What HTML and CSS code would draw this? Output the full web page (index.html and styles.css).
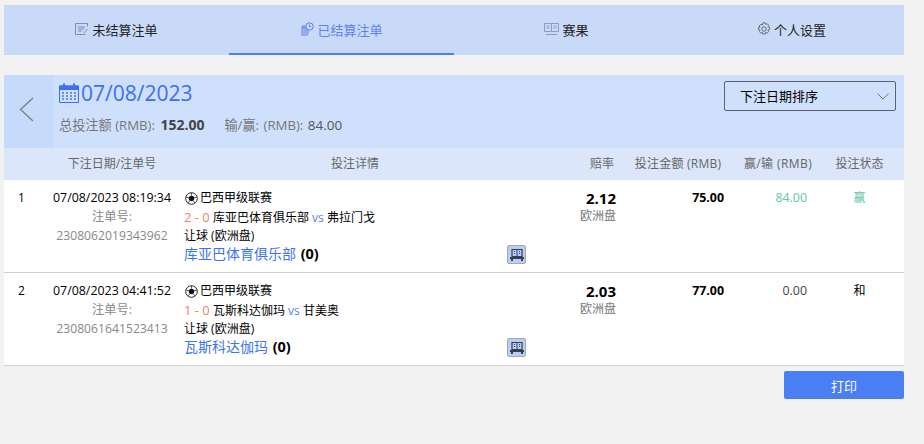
FILE: index.html
```html
<!DOCTYPE html>
<html lang="zh-CN">
<head>
<meta charset="utf-8">
<title>已结算注单</title>
<link rel="stylesheet" href="styles.css">
</head>
<body>
<nav class="tabs">
  <a class="tab"><svg class="tab-icon" viewBox="0 0 14 14"><path d="M.5 1.500h12v3M.5 1.500v11h10M3 5h7M3 7h6M3 9h4M9 11l3.500-4" fill="none" stroke="#7d8fb0"/></svg>未结算注单</a>
  <a class="tab active"><svg class="tab-icon" viewBox="0 0 14 14"><circle cx="9.500" cy="4.500" r="3.700" fill="none" stroke="#5c7fe8"/><path d="M9.500 2.500v2.200h1.700M5.500 4H2v1.500h3.500M1 7h6.500M1 9h8M1 11h8M1 13h7" fill="none" stroke="#5c7fe8"/></svg>已结算注单</a>
  <a class="tab"><svg class="tab-icon wide" viewBox="0 0 15 13"><path d="M.5.500h14v8H.5zM7.500.5v8M2.500 3h3M2.500 5h3M9.500 3h3M9.500 5h3M2 11.500h11" fill="none" stroke="#8a9cc0"/></svg>赛果</a>
  <a class="tab"><svg class="tab-icon" viewBox="0 0 14 14"><circle cx="7" cy="7" r="2.200" fill="none" stroke="#6b6f7a"/><path d="M5.800.8h2.400l.4 1.700 1.500-.9 1.700 1.700-.9 1.500 1.700.4v2.400l-1.700.4.9 1.500-1.700 1.700-1.500-.9-.4 1.700H5.800l-.4-1.700-1.500.9-1.700-1.700.9-1.500-1.700-.4V5.800l1.700-.4-.9-1.500 1.700-1.700 1.500.9z" fill="none" stroke="#6b6f7a"/></svg>个人设置</a>
</nav>

<main class="report">
  <header class="summary">
    <div class="back"><svg viewBox="0 0 15 25" class="back-icon"><path d="M14 1 1.500 12.500 14 24" fill="none" stroke="#7d7d7d" stroke-width="1.300"/></svg></div>
    <div class="summary-body">
      <h1 class="date"><svg class="cal" viewBox="0 0 20 20"><path d="M.5 3h19v16.500H.5z" fill="none" stroke="#3d6ff2"/><path d="M.5 2.500h19V7H.5z" fill="#3d6ff2"/><path d="M5 .5v4M15 .5v4" stroke="#3d6ff2" stroke-width="2"/><path d="M3 9h2v2H3zM7 9h2v2H7zM11 9h2v2h-2zM15 9h2v2h-2zM3 12h2v2H3zM7 12h2v2H7zM11 12h2v2h-2zM15 12h2v2h-2zM3 15h2v2H3zM7 15h2v2H7zM11 15h2v2h-2zM15 15h2v2h-2z" fill="#6d8ff2"/></svg>07/08/2023</h1>
      <p class="totals"><span>总投注额 (RMB): <b>152.00</b></span><span class="net">输/赢: (RMB): <em>84.00</em></span></p>
    </div>
    <div class="sort">下注日期排序<svg class="chev" viewBox="0 0 12 7"><path d="M.5.500 6 6 11.500.5" fill="none" stroke="#6b7480"/></svg></div>
  </header>

  <div class="row head">
    <div></div>
    <div class="c">下注日期/注单号</div>
    <div class="c">投注详情</div>
    <div class="r odds-h">赔率</div>
    <div class="c stake-h">投注金额 (RMB)</div>
    <div class="c pnl-h">赢/输 (RMB)</div>
    <div class="c state">投注状态</div>
  </div>

  <article class="row bet">
    <div class="idx">1</div>
    <div class="c when">07/08/2023 08:19:34<small>注单号:</small><small>2308062019343962</small></div>
    <div class="detail">
      <div class="league"><svg class="ball" viewBox="0 0 13 13"><circle cx="6.500" cy="6.500" r="5.800" fill="#fff" stroke="#222"/><circle cx="6.500" cy="6.500" r="2.700" fill="#111"/><path d="M6.500.7v3M1 5l3 .8M12 5l-3 .8M3 11l2-2.500M10 11 8 8.500" stroke="#555"/></svg>巴西甲级联赛</div>
      <div class="match"><span class="score">2 - 0</span> 库亚巴体育俱乐部 <i>vs</i> 弗拉门戈</div>
      <div class="market">让球 (欧洲盘)</div>
      <div class="pick"><a>库亚巴体育俱乐部</a> <b>(0)</b></div>
      <span class="replay"><svg viewBox="0 0 14 13"><path d="M2 1.500h10v7H2z" fill="none" stroke="#333f55" stroke-width="1.200"/><path d="M7 1.500v7M4 3.500h1M4 5.500h1M9 3.500h1M9 5.500h1" stroke="#333f55"/><path d="M0 9h14v2H0zM1 11h2v2H1zM11 11h2v2h-2z" fill="#333f55"/></svg></span>
    </div>
    <div class="r odds"><strong>2.12</strong><small>欧洲盘</small></div>
    <div class="r stake">75.00</div>
    <div class="r pnl win">84.00</div>
    <div class="c state win">赢</div>
  </article>

  <article class="row bet">
    <div class="idx">2</div>
    <div class="c when">07/08/2023 04:41:52<small>注单号:</small><small>2308061641523413</small></div>
    <div class="detail">
      <div class="league"><svg class="ball" viewBox="0 0 13 13"><circle cx="6.500" cy="6.500" r="5.800" fill="#fff" stroke="#222"/><circle cx="6.500" cy="6.500" r="2.700" fill="#111"/><path d="M6.500.7v3M1 5l3 .8M12 5l-3 .8M3 11l2-2.500M10 11 8 8.500" stroke="#555"/></svg>巴西甲级联赛</div>
      <div class="match"><span class="score">1 - 0</span> 瓦斯科达伽玛 <i>vs</i> 甘美奥</div>
      <div class="market">让球 (欧洲盘)</div>
      <div class="pick"><a>瓦斯科达伽玛</a> <b>(0)</b></div>
      <span class="replay"><svg viewBox="0 0 14 13"><path d="M2 1.500h10v7H2z" fill="none" stroke="#333f55" stroke-width="1.200"/><path d="M7 1.500v7M4 3.500h1M4 5.500h1M9 3.500h1M9 5.500h1" stroke="#333f55"/><path d="M0 9h14v2H0zM1 11h2v2H1zM11 11h2v2h-2z" fill="#333f55"/></svg></span>
    </div>
    <div class="r odds"><strong>2.03</strong><small>欧洲盘</small></div>
    <div class="r stake">77.00</div>
    <div class="r pnl">0.00</div>
    <div class="c state">和</div>
  </article>

  <div class="actions"><button class="print">打印</button></div>
</main>
</body>
</html>
```

FILE: styles.css
```css
* { box-sizing: border-box; }
html, body { margin: 0; }
body {
  width: 924px;
  height: 444px;
  overflow: hidden;
  background: #f2f2f2;
  padding: 5px 20px 0 4px;
  font-family: "Open Sans", "Noto Sans CJK SC", sans-serif;
  font-size: 12px;
  color: #000;
}
.tabs {
  display: grid;
  grid-template-columns: repeat(4, 225px);
  height: 50px;
  background: #c9daf8;
}
.tab {
  display: flex;
  align-items: center;
  justify-content: center;
  gap: 3px;
  font-size: 13px;
  color: #222;
  border-bottom: 2px solid transparent;
}
.tab.active { color: #5b82f0; border-bottom-color: #4a7ef5; }
.tab-icon { width: 14px; height: 14px; flex: none; }
.tab-icon.wide { width: 15px; height: 13px; }

.report { margin-top: 20px; }
.summary {
  display: flex;
  height: 73px;
  background: #cfe0fd;
}
.back {
  width: 50px;
  background: #c6dafc;
  display: flex;
  align-items: center;
  justify-content: center;
}
.back-icon { width: 15px; height: 25px; margin-left: -5px; margin-top: -4px; }
.summary-body { flex: 1; padding: 4px 0 0 5px; }
.date {
  display: flex;
  align-items: center;
  gap: 2px;
  margin: 0;
  height: 28px;
  font-size: 21px;
  font-weight: 400;
  color: #3d6ff2;
}
.cal { width: 20px; height: 20px; margin-top: -1px; }
.totals {
  display: flex;
  gap: 20px;
  margin: 8px 0 0;
  font-size: 13.200px;
  color: #777;
}
.totals b { color: #444; font-size: 14px; font-weight: 700; margin-left: 2px; }
.totals em { font-style: normal; color: #555; font-size: 13.500px; }
.totals .net { word-spacing: 1px; }
.sort {
  position: relative;
  align-self: flex-start;
  width: 172px;
  height: 30px;
  margin: 6px 8px 0 0;
  padding-left: 15px;
  border: 1px solid #5f6368;
  border-radius: 2px;
  line-height: 28px;
  font-size: 13px;
}
.chev { position: absolute; right: 6px; top: 11px; width: 12px; height: 7px; }

.row {
  display: grid;
  grid-template-columns: 36px 144px 342px 90px 108px 94px 86px;
}
.c { text-align: center; }
.r { text-align: right; }
.head {
  height: 32px;
  background: #dbe6fa;
  line-height: 32px;
  color: #666;
}
.head .odds-h { padding-right: 2px; }
.head .stake-h { padding-left: 16px; white-space: nowrap; letter-spacing: .25px; }
.head .pnl-h { padding-left: 14px; white-space: nowrap; letter-spacing: .4px; }
.state { padding-right: 3px; }
.bet {
  height: 93px;
  background: #fff;
  border-bottom: 1px solid #d0d0d0;
  padding-top: 9px;
  line-height: 18px;
}
.idx { padding-left: 14px; }
.when { font-size: 12.400px; white-space: nowrap; }
.when small {
  display: block;
  color: #888;
  font-size: 12.200px;
  margin-top: 1px;
}
.detail { position: relative; }
.league { display: flex; align-items: center; gap: 2px; height: 18px; padding-left: 1px; }
.ball { width: 13px; height: 13px; }
.match { margin-top: 1px; height: 18px; white-space: nowrap; }
.score { color: #f47f70; font-size: 13px; }
.match i { font-style: normal; color: #5b82f0; }
.market { margin-top: 1px; height: 18px; }
.pick { font-size: 14px; line-height: 18px; }
.pick a { color: #3f74f0; }
.pick b { font-size: 14.500px; margin-left: 1px; }
.replay {
  position: absolute;
  right: 0;
  top: 56px;
  width: 19px;
  height: 19px;
  border: 1px solid #a9a9a9;
  border-radius: 2px;
  background: #b9cdf5;
  display: flex;
  align-items: center;
  justify-content: center;
}
.replay svg { width: 14px; height: 13px; }
.odds strong { display: block; font-size: 15px; }
.odds small { display: block; font-size: 12px; color: #777; }
.stake { font-weight: 700; font-size: 12.400px; }
.pnl { padding-right: 11px; color: #444; font-size: 12.400px; }
.win { color: #63c7a5; }
.actions { display: flex; justify-content: flex-end; margin-top: 5px; }
.print {
  width: 120px;
  height: 28px;
  border: 0;
  border-radius: 2px;
  background: #4a7ef5;
  color: #fff;
  font: inherit;
  font-size: 13px;
}
```
